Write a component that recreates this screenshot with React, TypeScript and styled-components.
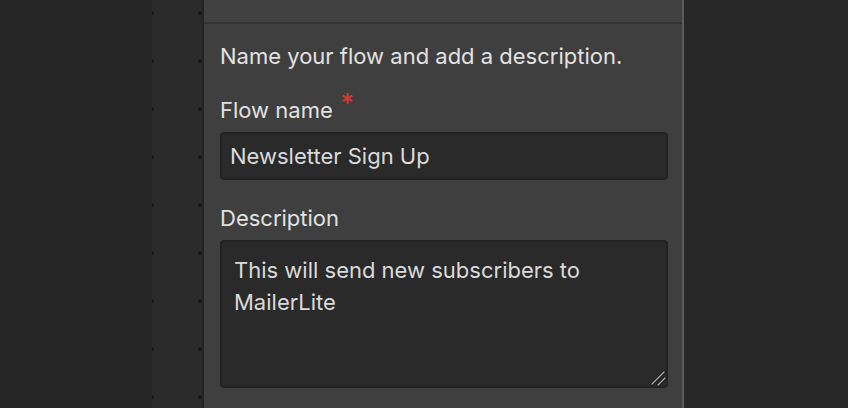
import React from "react";
import styled, { createGlobalStyle } from "styled-components";

const GlobalStyle = createGlobalStyle`
  html, body {
    margin: 0;
    padding: 0;
    background: #282828;
    overflow: hidden;
  }
  body {
    font-family: Inter, "Noto Sans", sans-serif;
  }
`;

const Page = styled.div`
  display: flex;
  width: 848px;
  height: 408px;
  overflow: hidden;
  background: #282828;
`;

const Sidebar = styled.div`
  width: 152px;
  flex-shrink: 0;
  background: #262626;
`;

const CanvasStrip = styled.div`
  width: 50px;
  flex-shrink: 0;
  background-color: #2a2a2a;
  background-image: radial-gradient(circle, #1a1a1a 1.6px, transparent 2.2px);
  background-size: 48px 48px;
  background-position: -24px -11px;
`;

const Modal = styled.div`
  width: 478px;
  flex-shrink: 0;
  display: flex;
  flex-direction: column;
  background: #3f3f3f;
  border-left: 2px solid #232323;
  border-right: 2px solid #5b5b5b;
`;

const ModalHeader = styled.div`
  height: 22px;
  flex-shrink: 0;
  background: #414141;
  border-bottom: 2px solid #333333;
`;

const ModalBody = styled.div`
  display: flex;
  flex-direction: column;
  padding: 18px 14px 0 16px;
`;

const Intro = styled.p`
  margin: 0 0 26px;
  font-size: 22px;
  line-height: 28px;
  color: #e2e2e2;
`;

const Field = styled.div`
  display: flex;
  flex-direction: column;
  gap: 8px;
  margin-bottom: 24px;
`;

const Label = styled.label`
  font-size: 22px;
  line-height: 28px;
  color: #e2e2e2;
`;

const Required = styled.span`
  display: inline-block;
  margin-left: 8px;
  color: #e5342c;
  font-size: 26px;
  line-height: 1;
  transform: translateY(-6px);
`;

const TextInput = styled.input`
  box-sizing: border-box;
  height: 48px;
  width: 100%;
  padding: 0 8px;
  font-family: Inter, "Noto Sans", sans-serif;
  font-size: 22px;
  color: #dadada;
  background: #2a2a2a;
  border: 2px solid #222222;
  border-radius: 4px;
  outline: none;
`;

const AreaWrap = styled.div`
  position: relative;
  display: flex;
`;

const TextArea = styled.textarea`
  box-sizing: border-box;
  height: 148px;
  width: 100%;
  padding: 12px 12px;
  font-family: Inter, "Noto Sans", sans-serif;
  font-size: 22px;
  line-height: 32px;
  color: #dadada;
  background: #2a2a2a;
  border: 2px solid #222222;
  border-radius: 4px;
  outline: none;
  resize: none;
`;

const ResizeGrip = styled.svg`
  position: absolute;
  right: 2px;
  bottom: 2px;
  width: 16px;
  height: 16px;
  pointer-events: none;
`;

export default function App() {
  return (
    <>
      <GlobalStyle />
      <Page>
        <Sidebar />
        <CanvasStrip />
        <Modal>
          <ModalHeader />
          <ModalBody>
            <Intro>Name your flow and add a description.</Intro>
            <Field>
              <Label>
                Flow name<Required>*</Required>
              </Label>
              <TextInput defaultValue="Newsletter Sign Up" />
            </Field>
            <Field>
              <Label>Description</Label>
              <AreaWrap>
                <TextArea defaultValue="This will send new subscribers to MailerLite" />
                <ResizeGrip viewBox="0 0 16 16">
                  <g strokeLinecap="round">
                    <path d="M2 14 L14 2" stroke="#1c1c1c" strokeWidth="3.2" />
                    <path d="M8 15 L15 8" stroke="#1c1c1c" strokeWidth="3.2" />
                    <path d="M2 14 L14 2" stroke="#a8a8a8" strokeWidth="1.4" />
                    <path d="M8 15 L15 8" stroke="#a8a8a8" strokeWidth="1.4" />
                  </g>
                </ResizeGrip>
              </AreaWrap>
            </Field>
          </ModalBody>
        </Modal>
      </Page>
    </>
  );
}
